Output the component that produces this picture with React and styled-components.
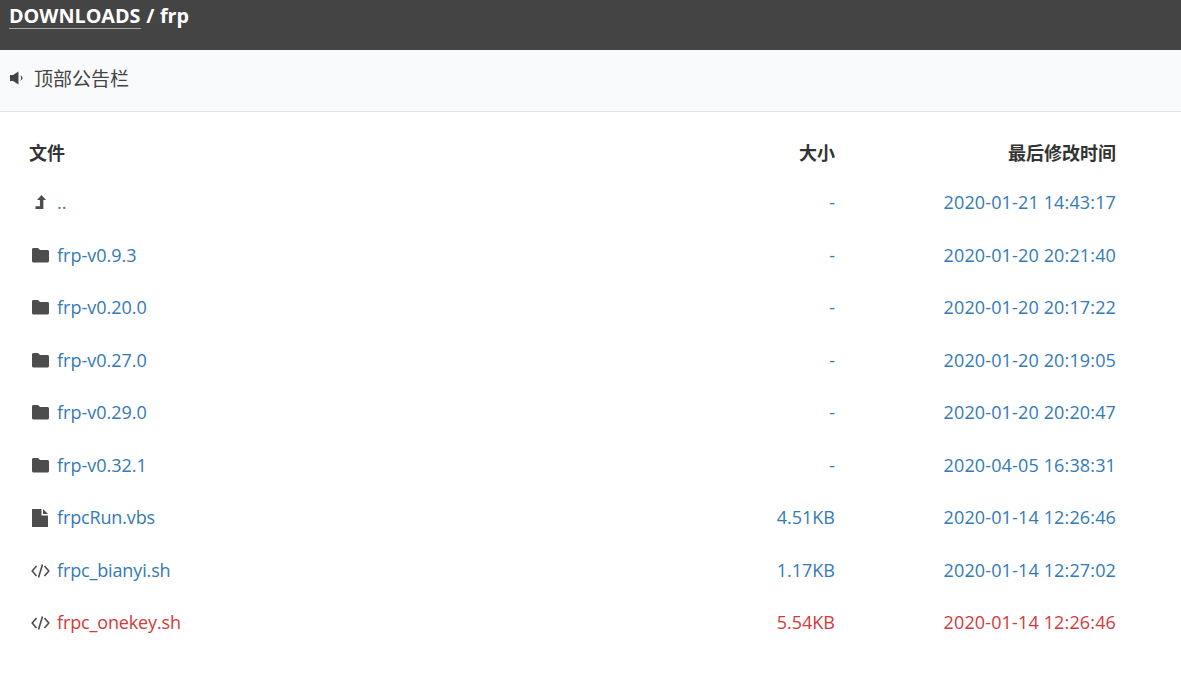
import React from 'react';
import styled, { createGlobalStyle } from 'styled-components';

const GlobalStyle = createGlobalStyle`
  html, body {
    margin: 0;
    padding: 0;
    background: #fff;
  }
  body {
    font-family: "Open Sans", "Noto Sans CJK SC", sans-serif;
    font-size: 18px;
    color: #333;
  }
`;

const Header = styled.header`
  height: 50px;
  background: #444;
  padding: 3px 9px 0;
  box-sizing: border-box;
  color: #fff;
  font-size: 19.75px;
  font-weight: 700;
  line-height: 25px;
  word-spacing: 0.5px;
`;

const Crumb = styled.span`
  display: inline-block;
  line-height: 24px;
  border-bottom: 1px solid #aaa;
`;

const Notice = styled.div`
  height: 62px;
  box-sizing: border-box;
  display: flex;
  align-items: center;
  gap: 10px;
  padding: 0 0 6px 10px;
  background: #f9fafc;
  border-bottom: 1px solid #e2e4e8;
  font-size: 19px;
  color: #444;
`;

const Table = styled.table`
  width: 1116px;
  margin: 14px 0 0 0;
  border-collapse: collapse;
  table-layout: fixed;
`;

const HeadCell = styled.th`
  height: 50px;
  box-sizing: border-box;
  padding: 2px 0 0;
  font-weight: 700;
  text-align: ${(p) => (p.$right ? 'right' : 'left')};
  &:first-child { padding-left: 29px; }
  color: #333;
`;

const Cell = styled.td`
  height: 52.5px;
  padding: 0;
  text-align: ${(p) => (p.$right ? 'right' : 'left')};
  color: ${(p) => (p.$active ? '#d33a3a' : '#337ab7')};
  letter-spacing: ${(p) => p.$spacing || 'normal'};
`;

const NameWrap = styled.div`
  display: flex;
  align-items: center;
  padding-left: 31px;
  letter-spacing: ${(p) => (p.$tight ? '-0.14px' : 'normal')};
`;

const IconBox = styled.span`
  width: 26px;
  display: flex;
  color: #4d4d4d;
`;

const Volume = () => (
  <svg width="14" height="14" viewBox="0 0 14 14" fill="currentColor">
    <path d="M0 4h3L8.500.5v13L3 10H0z" />
    <path d="M10 4.500c1.600 1 1.600 4 0 5 1.600-.3 2.600-1.400 2.600-2.500s-1-2.200-2.600-2.500z" />
  </svg>
);

const LevelUp = () => (
  <svg width="18" height="18" viewBox="0 0 18 18" fill="currentColor">
    <path d="M10.500 2 15 7h-2.600v9H4.500v-2.800h4.400V7H6z" />
  </svg>
);

const Folder = () => (
  <svg width="18" height="18" viewBox="0 0 18 18" fill="currentColor">
    <path d="M1 3.500C1 2.700 1.700 2 2.500 2H7l2 2h7.500c.8 0 1.500.7 1.500 1.500V15c0 .8-.7 1.500-1.500 1.500h-14C1.700 16.500 1 15.800 1 15z" />
  </svg>
);

const FileIcon = () => (
  <svg width="18" height="20" viewBox="0 0 18 20" fill="currentColor">
    <path d="M1 2h9.500v6.500H17V20H1z" />
    <path d="M12 2l5 5h-5z" />
  </svg>
);

const Code = () => (
  <svg width="19" height="18" viewBox="0 0 19 18" fill="none" stroke="currentColor" strokeWidth="1.6">
    <path d="M5.500 5 1.200 10l4.300 5M13.500 5l4.300 5-4.300 5M11.500 3.500l-4 13" />
  </svg>
);

const rows = [
  { icon: <LevelUp />, name: '..', size: '-', time: '2020-01-21 14:43:17' },
  { icon: <Folder />, name: 'frp-v0.9.3', size: '-', time: '2020-01-20 20:21:40' },
  { icon: <Folder />, name: 'frp-v0.20.0', size: '-', time: '2020-01-20 20:17:22' },
  { icon: <Folder />, name: 'frp-v0.27.0', size: '-', time: '2020-01-20 20:19:05' },
  { icon: <Folder />, name: 'frp-v0.29.0', size: '-', time: '2020-01-20 20:20:47' },
  { icon: <Folder />, name: 'frp-v0.32.1', size: '-', time: '2020-04-05 16:38:31' },
  { icon: <FileIcon />, name: 'frpcRun.vbs', size: '4.51KB', time: '2020-01-14 12:26:46', tight: true },
  { icon: <Code />, name: 'frpc_bianyi.sh', size: '1.17KB', time: '2020-01-14 12:27:02', tight: true },
  { icon: <Code />, name: 'frpc_onekey.sh', size: '5.54KB', time: '2020-01-14 12:26:46', tight: true, active: true },
];

export default function App() {
  return (
    <>
      <GlobalStyle />
      <Header>
        <Crumb>DOWNLOADS</Crumb> / frp
      </Header>
      <Notice>
        <Volume />
        <span>顶部公告栏</span>
      </Notice>
      <Table>
        <colgroup>
          <col />
          <col style={{ width: 300 }} />
          <col style={{ width: 281 }} />
        </colgroup>
        <thead>
          <tr>
            <HeadCell>文件</HeadCell>
            <HeadCell $right>大小</HeadCell>
            <HeadCell $right>最后修改时间</HeadCell>
          </tr>
        </thead>
        <tbody>
          {rows.map((r) => (
            <tr key={r.name}>
              <Cell $active={r.active}>
                <NameWrap $tight={r.tight}>
                  <IconBox>{r.icon}</IconBox>
                  {r.name}
                </NameWrap>
              </Cell>
              <Cell $right $active={r.active}>{r.size}</Cell>
              <Cell $right $active={r.active} $spacing="0.14px">{r.time}</Cell>
            </tr>
          ))}
        </tbody>
      </Table>
    </>
  );
}
